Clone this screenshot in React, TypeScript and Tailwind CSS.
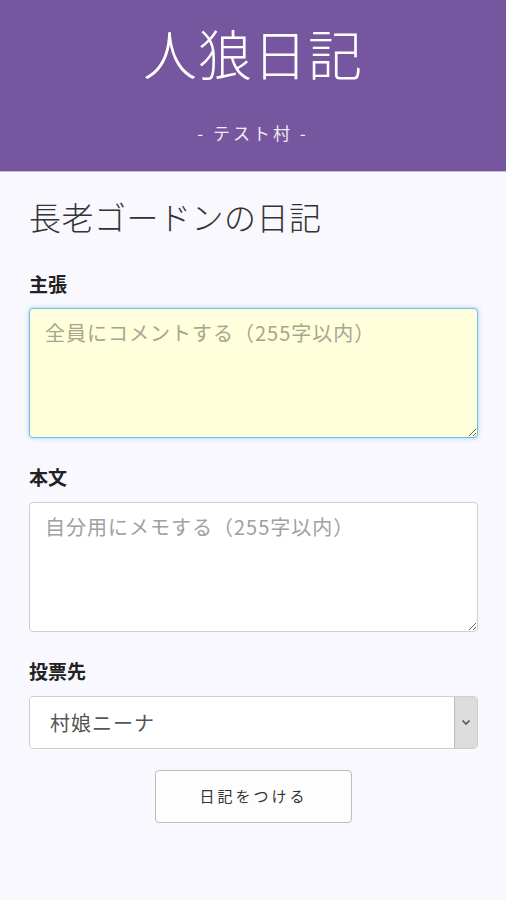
import React from "react";

export default function App() {
  const font = { fontFamily: '"Noto Sans CJK JP", "Noto Sans", sans-serif' };
  return (
    <div className="min-h-[900px] w-full bg-[#f8f8fe] text-[#333]" style={font}>
      <header className="bg-[#76569e] border-b border-[#c8b6e0] pt-[26px] pb-[26px] text-center text-white">
        <h1 className="text-[54px] leading-[54px] font-light tracking-[1px]">人狼日記</h1>
        <p className="mt-[41px] text-[17px] leading-[24px] tracking-[3px] text-[#f1ecf7]">- テスト村 -</p>
      </header>
      <main className="pl-[29px] pr-[28px]">
        <h2 className="mt-[24px] text-[32px] leading-[40px] font-light tracking-[0.5px] text-[#333]">長老ゴードンの日記</h2>

        <label className="mt-[36px] block text-[19px] leading-[24px] font-bold text-[#222]">主張</label>
        <textarea
          className="mt-[12px] block h-[130px] w-full rounded-[4px] border border-[#6cc0e5] bg-[#ffffdc] px-[15px] pt-[10px] text-[20px] leading-[28px] tracking-[1px] shadow-[0_0_4px_rgba(102,175,233,0.6)] outline-none placeholder:text-[#a5a590]"
          placeholder="全員にコメントする（255字以内）"
        />

        <label className="mt-[27px] block text-[19px] leading-[24px] font-bold text-[#222]">本文</label>
        <textarea
          className="mt-[13px] block h-[130px] w-full rounded-[4px] border border-[#cfcfcf] bg-white px-[15px] pt-[10px] text-[20px] leading-[28px] tracking-[1px] outline-none placeholder:text-[#a0a0a0]"
          placeholder="自分用にメモする（255字以内）"
        />

        <label className="mt-[27px] block text-[19px] leading-[24px] font-bold text-[#222]">投票先</label>
        <div className="mt-[13px] flex h-[53px] w-full rounded-[4px] border border-[#cfcfcf] bg-white overflow-hidden">
          <select
            className="h-full flex-1 appearance-none bg-white pl-[20px] text-[20px] tracking-[1px] text-[#555] outline-none"
            defaultValue="nina"
          >
            <option value="nina">村娘ニーナ</option>
          </select>
          <div className="flex w-[23px] items-center justify-center border-l border-[#bdbdbd] bg-[#dcdcdc]">
            <svg width="10" height="7" viewBox="0 0 10 7">
              <path d="M1.5 1.5 L5 5 L8.5 1.5" fill="none" stroke="#555" strokeWidth="1.6" />
            </svg>
          </div>
        </div>

        <div className="mt-[21px] flex justify-center">
          <button className="h-[53px] w-[197px] rounded-[4px] border border-[#bdbdbd] bg-[#fdfdfd] text-[15px] tracking-[3px] text-[#333]">
            日記をつける
          </button>
        </div>
      </main>
    </div>
  );
}
